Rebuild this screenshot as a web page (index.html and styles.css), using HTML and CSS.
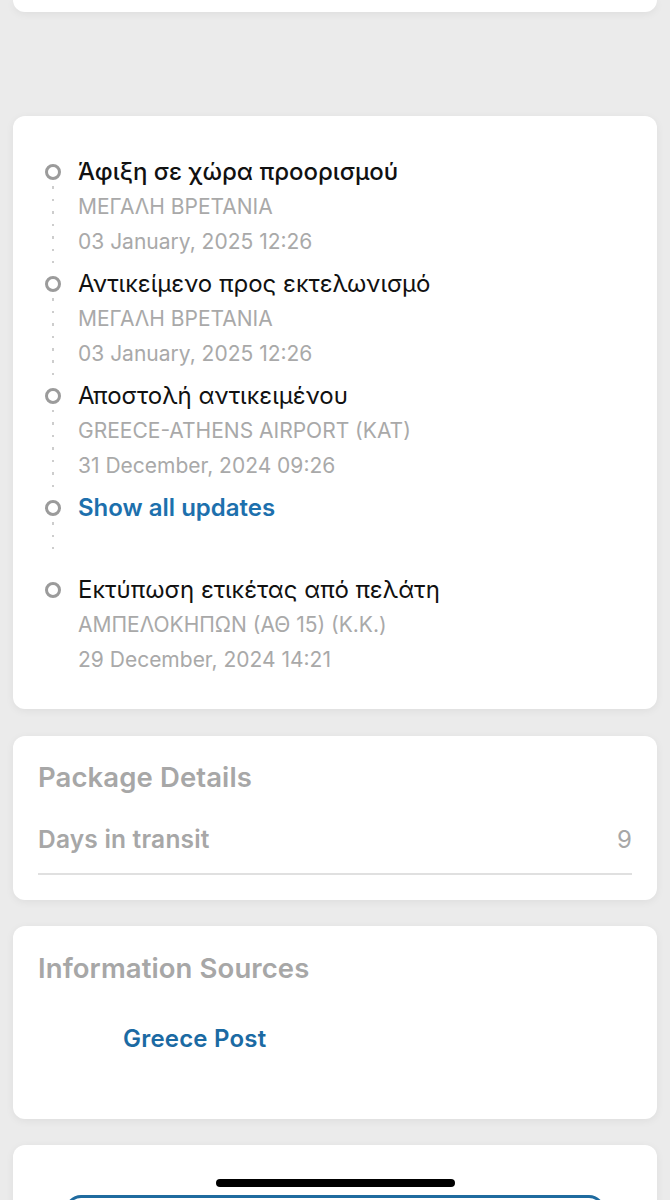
FILE: index.html
```html
<!DOCTYPE html>
<html lang="el">
<head>
<meta charset="utf-8">
<title>Tracking</title>
<link rel="stylesheet" href="styles.css">
</head>
<body>
<div class="page">
  <div class="card card-top"></div>

  <div class="card timeline-card">
    <div class="event">
      <div class="rail"><span class="dot"></span><span class="line"></span></div>
      <div class="event-body">
        <div class="ev-title strong">Άφιξη σε χώρα προορισμού</div>
        <div class="ev-sub">ΜΕΓΑΛΗ ΒΡΕΤΑΝΙΑ</div>
        <div class="ev-sub">03 January, 2025 12:26</div>
      </div>
    </div>
    <div class="event">
      <div class="rail"><span class="dot"></span><span class="line"></span></div>
      <div class="event-body">
        <div class="ev-title">Αντικείμενο προς εκτελωνισμό</div>
        <div class="ev-sub">ΜΕΓΑΛΗ ΒΡΕΤΑΝΙΑ</div>
        <div class="ev-sub">03 January, 2025 12:26</div>
      </div>
    </div>
    <div class="event">
      <div class="rail"><span class="dot"></span><span class="line"></span></div>
      <div class="event-body">
        <div class="ev-title">Αποστολή αντικειμένου</div>
        <div class="ev-sub">GREECE-ATHENS AIRPORT (KAT)</div>
        <div class="ev-sub">31 December, 2024 09:26</div>
      </div>
    </div>
    <div class="event event-more">
      <div class="rail"><span class="dot"></span><span class="line short"></span></div>
      <div class="event-body">
        <div class="ev-title link">Show all updates</div>
      </div>
    </div>
    <div class="event">
      <div class="rail"><span class="dot"></span></div>
      <div class="event-body">
        <div class="ev-title">Εκτύπωση ετικέτας από πελάτη</div>
        <div class="ev-sub">ΑΜΠΕΛΟΚΗΠΩΝ (ΑΘ 15) (Κ.Κ.)</div>
        <div class="ev-sub">29 December, 2024 14:21</div>
      </div>
    </div>
  </div>

  <div class="card details-card">
    <div class="section-title">Package Details</div>
    <div class="detail-row">
      <span class="detail-label">Days in transit</span>
      <span class="detail-value">9</span>
    </div>
  </div>

  <div class="card sources-card">
    <div class="section-title">Information Sources</div>
    <div class="source-link">Greece Post</div>
  </div>

  <div class="card bottom-card">
    <div class="outline-btn"></div>
  </div>
</div>
<div class="home-indicator"></div>
</body>
</html>
```

FILE: styles.css
```css
html, body {
  margin: 0;
  padding: 0;
}
body {
  background: #ebebeb;
  font-family: Inter, "Noto Sans", "DejaVu Sans", sans-serif;
  height: 1200px;
  overflow: hidden;
}
.page {
  display: flex;
  flex-direction: column;
  padding: 0 13px;
}
.card {
  background: #ffffff;
  border-radius: 12px;
  box-shadow: 0 2px 8px rgba(0, 0, 0, 0.06);
}
.card-top {
  height: 12px;
  border-radius: 0 0 12px 12px;
  margin-bottom: 104px;
}
.timeline-card {
  height: 593px;
  box-sizing: border-box;
  padding: 38px 20px 0 30px;
  display: flex;
  flex-direction: column;
  gap: 7px;
  margin-bottom: 27px;
}
.event {
  display: flex;
  align-items: stretch;
}
.rail {
  width: 35px;
  flex: none;
  display: flex;
  flex-direction: column;
  align-items: center;
}
.dot {
  width: 16px;
  height: 16px;
  box-sizing: border-box;
  border: 3px solid #9b9b9b;
  border-radius: 50%;
  margin-top: 9.5px;
  flex: none;
  margin-right: 15px;
}
.line {
  flex: 1;
  width: 2px;
  margin-right: 15px;
  margin-top: 6px;
  margin-bottom: -4px;
  background-image: repeating-linear-gradient(to bottom, #cdcdcd 0, #cdcdcd 2.5px, transparent 2.5px, transparent 12.5px);
}
.line.short {
  margin-bottom: 16px;
}
.event-body {
  display: flex;
  flex-direction: column;
  min-width: 0;
}
.ev-title {
  font-size: 24px;
  line-height: 35px;
  color: #111111;
  font-weight: 400;
  letter-spacing: 0;
  white-space: nowrap;
}
.ev-title.strong {
  font-weight: 500;
}
.ev-title.link {
  color: #1d70ad;
  font-weight: 600;
}
.event-more .event-body {
  padding-bottom: 40px;
}
.ev-sub {
  font-size: 21px;
  line-height: 35px;
  color: #a9a9a9;
  white-space: nowrap;
}
.details-card {
  height: 164px;
  box-sizing: border-box;
  padding: 24px 25px 0 25px;
  margin-bottom: 26px;
}
.section-title {
  font-size: 27.5px;
  font-weight: 600;
  color: #a7a7a7;
  line-height: 34px;
  letter-spacing: 0.1px;
}
.detail-row {
  display: flex;
  justify-content: space-between;
  align-items: center;
  margin-top: 28px;
  height: 34px;
  padding-bottom: 17px;
  border-bottom: 2px solid #e0e0e0;
}
.detail-label {
  font-size: 24.5px;
  font-weight: 600;
  color: #a7a7a7;
  letter-spacing: 0.2px;
}
.detail-value {
  font-size: 24px;
  color: #a7a7a7;
}
.sources-card {
  height: 193px;
  box-sizing: border-box;
  padding: 25px 25px 0 25px;
  margin-bottom: 26px;
}
.source-link {
  margin-top: 37px;
  margin-left: 85px;
  font-size: 24px;
  font-weight: 600;
  color: #1b6aa3;
  line-height: 34px;
  letter-spacing: 0.2px;
}
.bottom-card {
  height: 120px;
  box-sizing: border-box;
  padding: 50px 52px 0 52px;
  border-radius: 12px 12px 0 0;
}
.outline-btn {
  height: 60px;
  border: 3px solid #1f6b9f;
  border-radius: 16px;
}
.home-indicator {
  position: fixed;
  left: 216px;
  top: 1179px;
  width: 239px;
  height: 8px;
  border-radius: 4px;
  background: #000000;
}
```
